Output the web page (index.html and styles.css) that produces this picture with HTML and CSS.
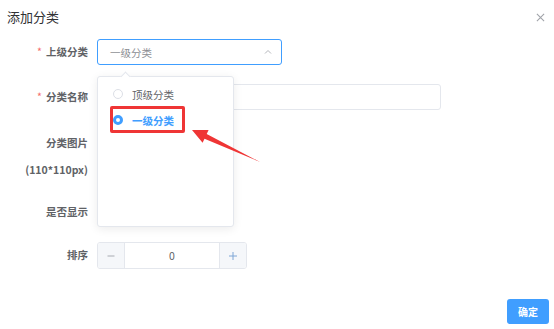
FILE: index.html
```html
<!DOCTYPE html>
<html lang="zh-CN">
<head>
  <meta charset="UTF-8">
  <meta name="viewport" content="width=device-width, initial-scale=1.0">
  <title>添加分类</title>
  <link rel="stylesheet" href="styles.css">
</head>
<body>
  <div class="dialog">
    <div class="dialog-header">
      <span class="dialog-title">添加分类</span>
      <svg class="close-icon" viewBox="0 0 10 10">
        <path d="M1 1l8 8M9 1l-8 8" />
      </svg>
    </div>

    <div class="dialog-body">
      <div class="form-item">
        <label class="form-label is-required">上级分类</label>
        <div class="form-content select-wrap">
          <div class="select is-focus">
            <span class="select-value">一级分类</span>
            <svg class="select-caret" viewBox="0 0 10 10">
              <path d="M2 6.5l3-3 3 3" />
            </svg>
          </div>

          <div class="dropdown">
            <span class="dropdown-arrow"></span>
            <ul class="dropdown-list">
              <li class="dropdown-item">
                <span class="radio"></span>
                <span>顶级分类</span>
              </li>
              <li class="dropdown-item is-checked">
                <span class="radio"></span>
                <span>一级分类</span>
              </li>
            </ul>
            <span class="mark-box"></span>
          </div>

          <!-- annotation arrow -->
          <svg class="mark-arrow" viewBox="185 120 80 50">
            <polygon points="192,130 208.6,130.1 206.7,134.1 260,162 204.5,138.7 202.6,142.7" />
          </svg>
        </div>
      </div>

      <div class="form-item">
        <label class="form-label is-required">分类名称</label>
        <div class="form-content">
          <input class="input" type="text">
        </div>
      </div>

      <div class="form-item form-item--image">
        <label class="form-label">分类图片<br>(110*110px)</label>
        <div class="form-content"></div>
      </div>

      <div class="form-item form-item--switch">
        <label class="form-label">是否显示</label>
        <div class="form-content"></div>
      </div>

      <div class="form-item">
        <label class="form-label">排序</label>
        <div class="form-content">
          <div class="stepper">
            <span class="stepper-btn">
              <svg viewBox="0 0 10 10"><path d="M1.5 5h7" /></svg>
            </span>
            <span class="stepper-value">0</span>
            <span class="stepper-btn">
              <svg viewBox="0 0 10 10"><path d="M1 5h8M5 1v8" /></svg>
            </span>
          </div>
        </div>
      </div>
    </div>

    <div class="dialog-footer">
      <button class="btn-primary">确定</button>
    </div>
  </div>
</body>
</html>
```

FILE: styles.css
```css
:root {
  --primary: #409eff;
  --text-main: #303133;
  --text-regular: #606266;
  --text-placeholder: #909399;
  --border: #dcdfe6;
  --border-light: #e4e7ed;
  --fill: #f5f7fa;
  --danger: #f56c6c;
  --mark: #ef3535;
}

* {
  margin: 0;
  padding: 0;
  box-sizing: border-box;
}

body {
  font-family: "Noto Sans CJK SC", "Noto Sans", sans-serif;
  background: #ffffff;
  color: var(--text-regular);
  width: 554px;
  height: 329px;
  overflow: hidden;
}

.dialog {
  position: relative;
  height: 329px;
}

.dialog-header {
  height: 34px;
  padding: 0 9px 0 7px;
  display: flex;
  align-items: center;
  justify-content: space-between;
}

.dialog-title {
  font-size: 13px;
  color: var(--text-main);
  line-height: 18px;
}

.close-icon {
  width: 9px;
  height: 9px;
  fill: none;
  stroke: #a0a3a9;
  stroke-width: 1.2;
}

.dialog-body {
  padding-top: 5px;
}

.form-item {
  display: flex;
  align-items: flex-start;
  margin-bottom: 19px;
}

.form-label {
  width: 97px;
  padding-right: 9px;
  text-align: right;
  font-size: 10.5px;
  font-weight: 700;
  line-height: 26px;
  color: var(--text-regular);
  flex-shrink: 0;
}

.form-label.is-required::before {
  content: "*";
  color: var(--danger);
  margin-right: 4px;
  font-weight: 400;
}

.form-item--image {
  margin-bottom: 16px;
}

.form-item--image .form-label {
  line-height: 27px;
}

.form-item--switch {
  margin-bottom: 17px;
}

.form-content {
  flex: 1;
}

.select-wrap {
  position: relative;
}

.select {
  width: 185px;
  height: 26px;
  border: 1px solid var(--border);
  border-radius: 3px;
  display: flex;
  align-items: center;
  justify-content: space-between;
  padding: 0 8px 0 12px;
}

.select.is-focus {
  border-color: var(--primary);
}

.select-value {
  font-size: 10.5px;
  color: #8c8e93;
}

.select-caret {
  width: 10px;
  height: 10px;
  fill: none;
  stroke: #b4b6bb;
  stroke-width: 1;
}

.input {
  display: block;
  width: 344px;
  height: 26px;
  border: 1px solid var(--border-light);
  border-radius: 3px;
  outline: none;
}

/* dropdown panel over the form */
.dropdown {
  position: absolute;
  top: 37px;
  left: 0;
  width: 137px;
  height: 151px;
  background: #ffffff;
  border: 1px solid var(--border-light);
  border-radius: 3px;
  box-shadow: 0 2px 10px rgba(0, 0, 0, 0.08);
  z-index: 2;
}

.dropdown-arrow {
  position: absolute;
  top: -4px;
  left: 24px;
  width: 7px;
  height: 7px;
  background: #ffffff;
  border-top: 1px solid var(--border-light);
  border-left: 1px solid var(--border-light);
  transform: rotate(45deg);
}

.dropdown-list {
  list-style: none;
  padding-top: 4px;
}

.dropdown-item {
  height: 26px;
  display: flex;
  align-items: center;
  gap: 9px;
  padding-left: 15px;
  font-size: 10.5px;
  color: var(--text-regular);
}

.radio {
  width: 10px;
  height: 10px;
  border: 1px solid var(--border);
  border-radius: 50%;
  background: #ffffff;
}

.dropdown-item.is-checked {
  color: var(--primary);
  font-weight: 700;
}

.dropdown-item.is-checked .radio {
  border: 3px solid var(--primary);
}

.mark-box {
  position: absolute;
  top: 29px;
  left: 12px;
  width: 75px;
  height: 27px;
  border: 3px solid var(--mark);
  border-radius: 2px;
}

.mark-arrow {
  position: absolute;
  top: 81px;
  left: 88px;
  width: 80px;
  height: 50px;
  fill: var(--mark);
  z-index: 3;
}

.stepper {
  width: 150px;
  height: 27px;
  border: 1px solid var(--border-light);
  border-radius: 3px;
  display: flex;
  overflow: hidden;
}

.stepper-btn {
  width: 27px;
  background: var(--fill);
  display: flex;
  align-items: center;
  justify-content: center;
}

.stepper-btn:first-child {
  border-right: 1px solid var(--border-light);
}

.stepper-btn:last-child {
  border-left: 1px solid var(--border-light);
}

.stepper-btn svg {
  width: 10px;
  height: 10px;
  fill: none;
  stroke: #a8abb2;
  stroke-width: 1;
}

.stepper-btn:last-child svg {
  stroke: #7fa6d6;
}

.stepper-value {
  flex: 1;
  display: flex;
  align-items: center;
  justify-content: center;
  font-size: 10.5px;
  color: var(--text-regular);
}

.dialog-footer {
  display: flex;
  justify-content: flex-end;
  padding: 11px 5px 0 0;
}

.btn-primary {
  width: 42px;
  height: 25px;
  border: none;
  border-radius: 3px;
  background: var(--primary);
  color: #ffffff;
  font-family: inherit;
  font-size: 10px;
  font-weight: 700;
}
```
